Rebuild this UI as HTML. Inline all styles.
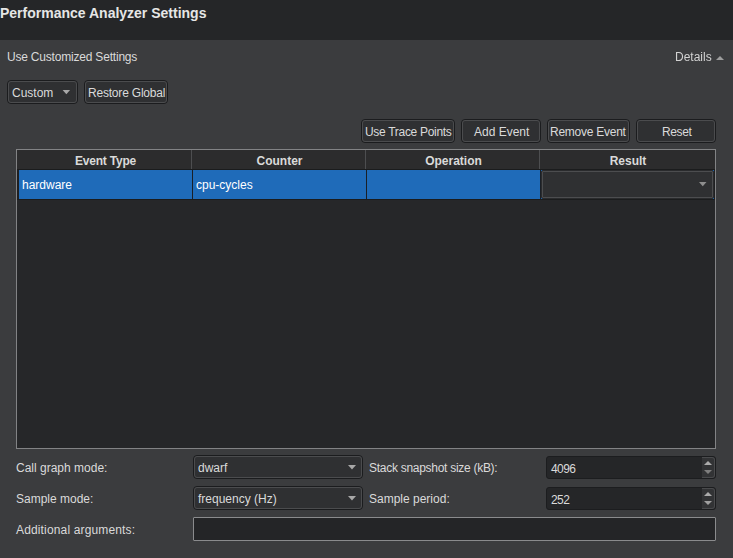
<!DOCTYPE html>
<html><head><meta charset="utf-8">
<style>
*{box-sizing:border-box;margin:0;padding:0}
html,body{width:733px;height:558px;overflow:hidden;background:#3b3c3e;font-family:"Liberation Sans",sans-serif;font-size:12px;color:#dadada}
.a{position:absolute}
.t{position:absolute;white-space:pre;line-height:14px}
svg{position:absolute;overflow:visible}
#hdr{left:0;top:0;width:733px;height:40px;background:#252628}
.btn{position:absolute;border:1px solid #1b1c1e;border-radius:4px;background:#2f3032}
.btn::after{content:"";position:absolute;left:0;top:0;right:0;bottom:0;border:1px solid #4b4c4e;border-radius:3px}
#tbl{left:16px;top:149px;width:700px;height:300px;border:1px solid #828385;background:#262729}
.hdiv{position:absolute;top:150px;width:1px;height:19px;background:#4d4e50}
.bt{font-weight:bold}
.spin{position:absolute;border-radius:3px;background:#252628;border:1px solid #1c1d1f}
.spinb{position:absolute;background:#323335;border:1px solid #4a4b4d;border-left:0;border-radius:0 3px 3px 0}
#le{left:193px;top:517px;width:523px;height:24px;border:1px solid #8a8b8d;background:#242527;border-radius:1px}
</style></head><body>
<div id="hdr" class="a"></div>
<div class="t bt" style="left:0;top:6px;font-size:14px;color:#e6e6e6">Performance Analyzer Settings</div>

<div class="t" style="left:7px;top:50px;letter-spacing:-0.2px">Use Customized Settings</div>
<div class="t" style="left:675px;top:50px;color:#d2d2d2;will-change:transform">Details</div>
<svg style="left:716px;top:56px" width="8" height="4"><polygon points="0,4 8,4 4,0" fill="#9d9d9d"/></svg>

<div class="btn" style="left:7px;top:80px;width:71px;height:24px"></div>
<div class="t" style="left:12px;top:86px">Custom</div>
<svg style="left:62px;top:90px" width="9" height="5"><polygon points="0.6,0 8.1,0 4.35,4.2" fill="#a8a8a8"/></svg>
<div class="btn" style="left:84px;top:80px;width:84px;height:24px"></div>
<div class="t" style="left:88px;top:86px;letter-spacing:-0.2px">Restore Global</div>

<div class="btn" style="left:361px;top:119px;width:94px;height:24px"></div>
<div class="t" style="left:365px;top:125px;letter-spacing:-0.3px">Use Trace Points</div>
<div class="btn" style="left:461px;top:119px;width:80px;height:24px"></div>
<div class="t" style="left:474px;top:125px">Add Event</div>
<div class="btn" style="left:547px;top:119px;width:83px;height:24px"></div>
<div class="t" style="left:550px;top:125px;letter-spacing:-0.25px">Remove Event</div>
<div class="btn" style="left:636px;top:119px;width:80px;height:24px"></div>
<div class="t" style="left:662px;top:125px;letter-spacing:-0.4px">Reset</div>

<div id="tbl" class="a"></div>
<div class="a" style="left:17px;top:150px;width:698px;height:19px;background:#2c2c2d"></div>
<div class="hdiv" style="left:191px"></div>
<div class="hdiv" style="left:365px"></div>
<div class="hdiv" style="left:539px"></div>
<div class="a" style="left:17px;top:169px;width:698px;height:1px;background:#1b1c1d"></div>
<div class="t bt" style="left:18px;width:175px;text-align:center;top:154px;letter-spacing:-0.2px">Event Type</div>
<div class="t bt" style="left:193px;width:173px;text-align:center;top:154px">Counter</div>
<div class="t bt" style="left:367px;width:173px;text-align:center;top:154px">Operation</div>
<div class="t bt" style="left:541px;width:174px;text-align:center;top:154px">Result</div>

<div class="a" style="left:17px;top:170px;width:2px;height:29px;background:#1e1f21"></div>
<div class="a" style="left:19px;top:170px;width:521px;height:29px;background:#1f6bb9"></div>
<div class="a" style="left:192px;top:170px;width:1px;height:29px;background:#1a1f26"></div>
<div class="a" style="left:366px;top:170px;width:1px;height:29px;background:#1a1f26"></div>
<div class="a" style="left:540px;top:170px;width:1px;height:29px;background:#1a1f26"></div>
<div class="a" style="left:541px;top:170px;width:173px;height:29px;background:#1f6bb9"></div>
<div class="a" style="left:714px;top:170px;width:1px;height:29px;background:#1e1f21"></div>
<div class="a" style="left:17px;top:199px;width:698px;height:1px;background:#1b1c1d"></div>
<div class="t" style="left:22px;top:178px;color:#fff">hardware</div>
<div class="t" style="left:196px;top:178px;color:#fff">cpu-cycles</div>
<div class="a" style="left:541px;top:170px;width:173px;height:29px;background:#2f3032;border:1px solid #2a2b2d;border-radius:2px"></div>
<div class="a" style="left:542px;top:171px;width:171px;height:27px;border:1px solid #4c4d4f;border-radius:1px"></div>
<svg style="left:699px;top:182px" width="8" height="5"><polygon points="0,0 7.5,0 3.75,4.3" fill="#8e8e8e"/></svg>

<div class="t" style="left:16px;top:461px">Call graph mode:</div>
<div class="btn" style="left:193px;top:455px;width:170px;height:24px"></div>
<div class="t" style="left:198px;top:461px">dwarf</div>
<svg style="left:348px;top:465px" width="8" height="5"><polygon points="0,0 8,0 4,4.5" fill="#a8a8a8"/></svg>
<div class="t" style="left:369px;top:461px;letter-spacing:-0.28px">Stack snapshot size (kB):</div>
<div class="spin" style="left:546px;top:456px;width:170px;height:23px"></div>
<div class="spinb" style="left:702px;top:457px;width:13px;height:21px"></div>
<svg style="left:704px;top:461px" width="8" height="4"><polygon points="0,4 8,4 4,0" fill="#ababab"/></svg>
<svg style="left:704px;top:470px" width="8" height="4"><polygon points="0,0 8,0 4,4" fill="#7e7e7e"/></svg>
<div class="t" style="left:551px;top:462px;letter-spacing:-0.6px">4096</div>

<div class="t" style="left:16px;top:492px">Sample mode:</div>
<div class="btn" style="left:193px;top:486px;width:170px;height:24px"></div>
<div class="t" style="left:198px;top:492px">frequency (Hz)</div>
<svg style="left:348px;top:496px" width="8" height="5"><polygon points="0,0 8,0 4,4.5" fill="#a8a8a8"/></svg>
<div class="t" style="left:369px;top:492px">Sample period:</div>
<div class="spin" style="left:546px;top:487px;width:170px;height:23px"></div>
<div class="spinb" style="left:702px;top:488px;width:13px;height:21px"></div>
<svg style="left:704px;top:492px" width="8" height="4"><polygon points="0,4 8,4 4,0" fill="#ababab"/></svg>
<svg style="left:704px;top:501px" width="8" height="4"><polygon points="0,0 8,0 4,4" fill="#a0a0a0"/></svg>
<div class="t" style="left:551px;top:493px;letter-spacing:-0.6px">252</div>

<div class="t" style="left:16px;top:523px;letter-spacing:0.15px">Additional arguments:</div>
<div id="le" class="a"></div>
</body></html>
